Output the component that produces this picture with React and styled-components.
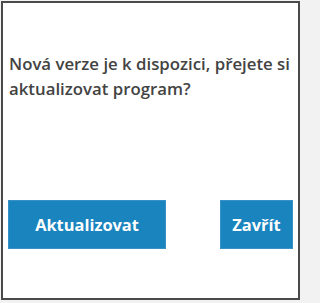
import styled, { createGlobalStyle } from 'styled-components'

const GlobalStyle = createGlobalStyle`
  html, body {
    margin: 0;
    padding: 0;
    background: #f2f2f2;
  }
  body {
    font-family: "Open Sans", "Noto Sans", sans-serif;
  }
`;

const Page = styled.div`
  width: 303px;
  height: 303px;
  padding: 1px;
  box-sizing: border-box;
`;

const Dialog = styled.div`
  width: 299px;
  height: 299px;
  box-sizing: border-box;
  background: #ffffff;
  border: 2px solid #4a4a4a;
  display: flex;
  flex-direction: column;
  justify-content: space-between;
  padding: 48px 5px 49px 5px;
`;

const Message = styled.p`
  margin: 0;
  padding-left: 1px;
  font-size: 16.8px;
  font-weight: 600;
  line-height: 25px;
  color: #434343;
`;

const ButtonRow = styled.div`
  display: flex;
  justify-content: space-between;
  align-items: center;
`;

const Button = styled.button`
  width: ${p => p.$width}px;
  height: 49px;
  box-sizing: border-box;
  background: #1a84bf;
  border: 1px solid #3791c6;
  color: #ffffff;
  font-family: "Open Sans", "Noto Sans", sans-serif;
  font-size: 16.4px;
  font-weight: 700;
  padding: 0;
  cursor: pointer;
`;

const App = () => {
    return (
        <Page>
            <GlobalStyle />
            <Dialog>
                <Message>Nová verze je k dispozici, přejete si aktualizovat program?</Message>
                <ButtonRow>
                    <Button $width={158}>Aktualizovat</Button>
                    <Button $width={73}>Zavřít</Button>
                </ButtonRow>
            </Dialog>
        </Page>
    )
}

export default App
